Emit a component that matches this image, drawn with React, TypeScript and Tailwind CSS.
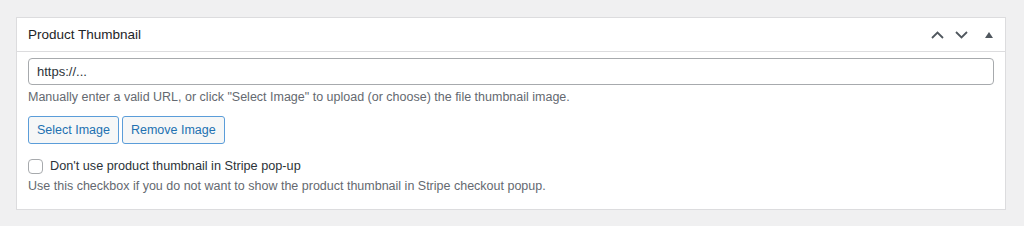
import React, { useState } from 'react';

export default function App() {
  const [url, setUrl] = useState('');
  const [noThumb, setNoThumb] = useState(false);

  return (
    <div className="h-[226px] bg-[#f0f0f1] pl-4 pt-[17px] font-['Liberation_Sans',Arial,sans-serif] text-[#1d2327]">
      <div className="w-[990px] border border-[#dcdcde] bg-white">
        {/* header */}
        <div className="flex h-[34px] items-center justify-between border-b border-[#dcdcde] pl-[11px] pr-[6px]">
          <h2 className="text-[13.5px] leading-none">Product Thumbnail</h2>
          <div className="flex items-center text-[#50575e]">
            <button className="flex h-[20px] w-[24px] items-center justify-center" title="Move up">
              <svg width="13" height="8" viewBox="0 0 13 8" fill="none" stroke="currentColor" strokeWidth="1.8">
                <path d="M1 7l5.5-5.5L12 7" />
              </svg>
            </button>
            <button className="flex h-[20px] w-[24px] items-center justify-center" title="Move down">
              <svg width="13" height="8" viewBox="0 0 13 8" fill="none" stroke="currentColor" strokeWidth="1.8">
                <path d="M1 1l5.5 5.5L12 1" />
              </svg>
            </button>
            <button className="ml-[6px] flex h-[20px] w-[20px] items-center justify-center" title="Toggle panel">
              <svg width="8" height="6" viewBox="0 0 8 6" fill="currentColor">
                <path d="M4 0l4 6H0z" />
              </svg>
            </button>
          </div>
        </div>

        {/* body */}
        <div className="px-[11px] pt-[6px] pb-[15px]">
          <input
            type="text"
            value={url}
            onChange={(e) => setUrl(e.target.value)}
            placeholder="https://..."
            className="block h-[27px] w-[966px] rounded-[4px] border border-[#a7aaad] px-[8px] text-[13px] text-[#2c3338] placeholder:text-[#2c3338] outline-none"
          />
          <p className="mt-[4px] text-[12.5px] leading-[16px] text-[#646970]">
            Manually enter a valid URL, or click "Select Image" to upload (or choose) the file thumbnail image.
          </p>

          <div className="mt-[11px] flex gap-[3px]">
            <button className="h-[28px] rounded-[3px] border border-[#5b9dd9] bg-[#f6f7f7] px-[8px] text-[12.5px] text-[#2271b1]">
              Select Image
            </button>
            <button className="h-[28px] rounded-[3px] border border-[#5b9dd9] bg-[#f6f7f7] px-[8px] text-[12.5px] text-[#2271b1]">
              Remove Image
            </button>
          </div>

          <label className="mt-[14px] flex items-center gap-[7px] text-[12.7px] leading-[16px] text-[#2c3338]">
            <input
              type="checkbox"
              checked={noThumb}
              onChange={(e) => setNoThumb(e.target.checked)}
              className="h-[15px] w-[15px] appearance-none rounded-[4px] border border-[#a7aaad] bg-white"
            />
            Don't use product thumbnail in Stripe pop-up
          </label>
          <p className="mt-[4px] text-[12.5px] leading-[16px] text-[#646970]">
            Use this checkbox if you do not want to show the product thumbnail in Stripe checkout popup.
          </p>
        </div>
      </div>
    </div>
  );
}
